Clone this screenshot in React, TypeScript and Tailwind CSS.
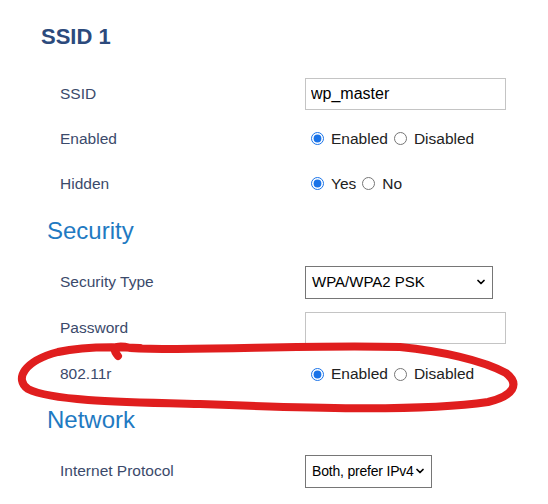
import { ChevronDown } from "lucide-react";

const font = { fontFamily: '"Liberation Sans", Arial, sans-serif' };

const Label = ({ children }: { children: React.ReactNode }) => (
  <div className="pl-[60px] text-[15.5px] text-[#3b4a6b]">{children}</div>
);

const Radios = ({ name, a, b }: { name: string; a: string; b: string }) => (
  <div className="flex items-center text-[15.5px] text-[#222]">
    <input type="radio" name={name} defaultChecked className="ml-[6px] mr-[3px] h-[13px] w-[13px] accent-[#1a73e8]" />
    <span className="ml-1">{a}</span>
    <input type="radio" name={name} className="ml-[6px] mr-[3px] h-[13px] w-[13px] accent-[#1a73e8]" />
    <span className="ml-1">{b}</span>
  </div>
);

const Row = ({ label, children }: { label: string; children: React.ReactNode }) => (
  <div className="grid h-[46px] grid-cols-[305px_1fr] items-center">
    <Label>{label}</Label>
    <div>{children}</div>
  </div>
);

const Select = ({ value, className }: { value: string; className: string }) => (
  <div
    className={`flex h-[33px] items-center justify-between whitespace-nowrap border border-[#767676] bg-white pl-[6px] pr-[5px] text-black ${className}`}
  >
    <span>{value}</span>
    <ChevronDown size={12} strokeWidth={3.5} className="shrink-0" />
  </div>
);

export default function App() {
  return (
    <div className="relative h-[504px] w-[548px] overflow-hidden bg-white pt-[22px]" style={font}>
      <h1 className="h-[30px] pl-[41px] text-[22px] font-bold leading-[30px] text-[#2c4a7c]">SSID 1</h1>

      <div className="mt-[19px]">
        <div className="grid h-[45px] grid-cols-[305px_1fr] items-center">
          <Label>SSID</Label>
          <input
            defaultValue="wp_master"
            className="h-[32px] w-[201px] border border-[#c4c4c4] px-[5px] text-[16px] text-black outline-none"
          />
        </div>
        <div className="grid h-[45px] grid-cols-[305px_1fr] items-center">
          <Label>Enabled</Label>
          <Radios name="en" a="Enabled" b="Disabled" />
        </div>
        <div className="grid h-[45px] grid-cols-[305px_1fr] items-center">
          <Label>Hidden</Label>
          <Radios name="hid" a="Yes" b="No" />
        </div>
      </div>

      <h2 className="flex h-[50px] items-center pl-[47px] text-[24px] text-[#1f7ac2]">Security</h2>

      <div className="mt-[3px]">
        <Row label="Security Type">
          <Select value="WPA/WPA2 PSK" className="w-[188px] text-[15px]" />
        </Row>
        <Row label="Password">
          <input type="password" className="h-[32px] w-[201px] border border-[#c4c4c4] px-[5px] outline-none" />
        </Row>
        <Row label="802.11r">
          <Radios name="ft" a="Enabled" b="Disabled" />
        </Row>
      </div>

      <h2 className="flex h-[46px] items-center pl-[47px] text-[24px] text-[#1f7ac2]">Network</h2>

      <div className="mt-[5px]">
        <Row label="Internet Protocol">
          <Select value="Both, prefer IPv4" className="w-[127px] pl-[5px] pr-[4px] text-[14px] tracking-[-0.2px]" />
        </Row>
      </div>

      {/* hand-drawn red circle around the 802.11r row */}
      <svg className="pointer-events-none absolute left-0 top-0" width="548" height="504" viewBox="0 0 548 504">
        <path
          d="M 118 356 C 112 349, 114 344, 130 348 C 200 352, 300 344, 400 347 C 440 351, 482 360, 506 373 C 520 384, 514 396, 488 402 C 420 412, 300 408, 200 404 C 120 402, 52 401, 28 389 C 14 379, 24 361, 58 352 C 80 347, 104 346, 140 348"
          fill="none"
          stroke="#e01e1e"
          strokeWidth="8"
          strokeLinecap="round"
          strokeLinejoin="round"
        />
      </svg>
    </div>
  );
}
